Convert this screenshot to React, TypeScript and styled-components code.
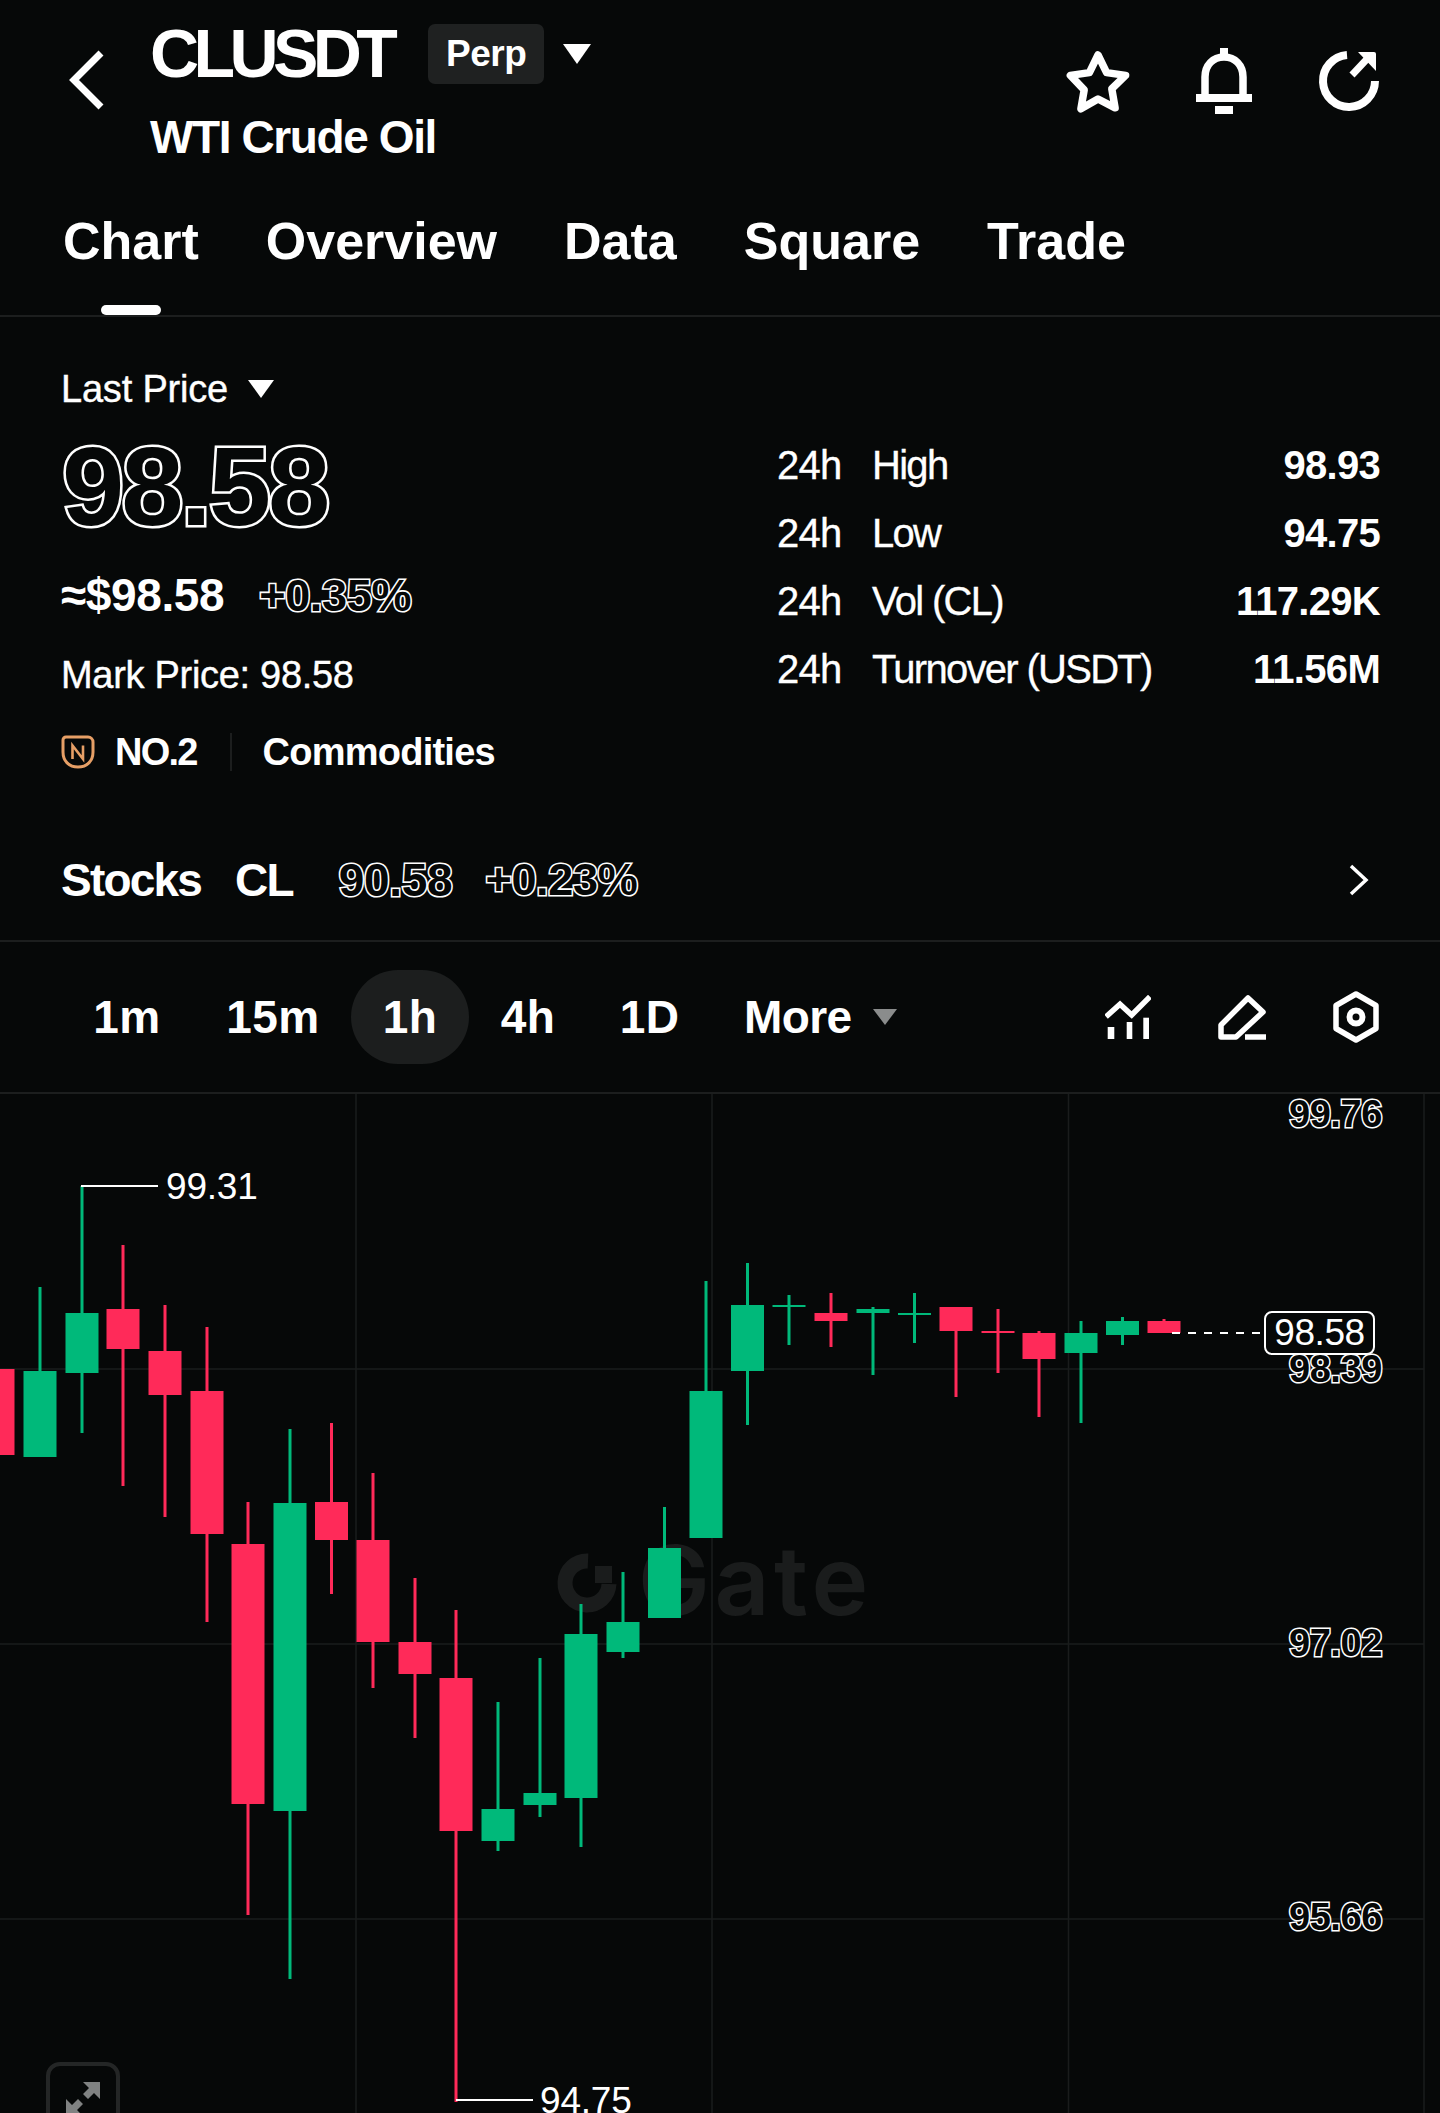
import React from "react";
import styled, { createGlobalStyle } from "styled-components";

const GlobalStyle = createGlobalStyle`
  html, body {
    margin: 0;
    padding: 0;
    background: #060808;
  }
  * {
    box-sizing: border-box;
  }
`;

const FONT = `"Liberation Sans", Arial, sans-serif`;

const Page = styled.div`
  width: 1440px;
  height: 2113px;
  overflow: hidden;
  background: #060808;
  color: #fff;
  font-family: ${FONT};
  display: flex;
  flex-direction: column;
`;

const Header = styled.div`
  height: 193px;
  padding: 20px 60px 0 68px;
  display: flex;
  align-items: flex-start;
`;

const BackBtn = styled.div`
  width: 83px;
  padding-top: 30px;
`;

const TitleCol = styled.div`
  display: flex;
  flex-direction: column;
`;

const TitleRow = styled.div`
  display: flex;
  align-items: flex-start;
`;

const Symbol = styled.div`
  font-size: 68px;
  line-height: 66px;
  font-weight: 700;
  letter-spacing: -5.6px;
  margin-left: -1px;
`;

const Badge = styled.div`
  margin: 4px 0 0 36px;
  width: 116px;
  height: 60px;
  border-radius: 7px;
  background: #1f2121;
  font-size: 37px;
  font-weight: 700;
  display: flex;
  align-items: center;
  justify-content: center;
  letter-spacing: -0.5px;
`;

const Tri = styled.div<{ $w: number; $h: number; $c?: string }>`
  width: 0;
  height: 0;
  border-left: ${(p) => p.$w / 2}px solid transparent;
  border-right: ${(p) => p.$w / 2}px solid transparent;
  border-top: ${(p) => p.$h}px solid ${(p) => p.$c || "#fff"};
`;

const BadgeCaret = styled.div`
  margin: 24px 0 0 19px;
`;

const SubTitle = styled.div`
  margin-top: 27px;
  margin-left: -1px;
  font-size: 46px;
  line-height: 48px;
  font-weight: 700;
  letter-spacing: -1.4px;
`;

const HeaderIcons = styled.div`
  margin-left: auto;
  padding-top: 30px;
  display: flex;
  align-items: flex-start;
  gap: 65px;
  svg {
    overflow: visible;
  }
`;

const Tabs = styled.div`
  height: 124px;
  padding-left: 63px;
  display: flex;
  gap: 67px;
  border-bottom: 2px solid #1c1e1e;
`;

const Tab = styled.div<{ $active?: boolean }>`
  position: relative;
  font-size: 52px;
  line-height: 58px;
  font-weight: 700;
  letter-spacing: 0;
  padding-top: 19px;
  height: 124px;
  ${(p) =>
    p.$active &&
    `
    &::after {
      content: "";
      position: absolute;
      left: 38px;
      bottom: 2px;
      width: 60px;
      height: 10px;
      border-radius: 5px;
      background: #fff;
    }
  `}
`;

const Stats = styled.div`
  height: 625px;
  padding: 0 60px 0 61px;
  border-bottom: 2px solid #1c1e1e;
`;

const TopGrid = styled.div`
  display: grid;
  grid-template-columns: 716px 1fr;
`;

const LeftCol = styled.div`
  display: flex;
  flex-direction: column;
`;

const LastPrice = styled.div`
  margin-top: 50px;
  display: flex;
  align-items: center;
  gap: 20px;
  font-size: 38px;
  line-height: 44px;
  letter-spacing: -0.2px;
  -webkit-text-stroke: 0.4px #fff;
`;

const outline = (w: number) => `
  color: #060808;
  -webkit-text-stroke: ${w}px #fff;
  paint-order: stroke fill;
  font-weight: 700;
`;

const BigPrice = styled.div`
  ${outline(5)}
  margin-top: 17px;
  margin-left: 1px;
  font-size: 112px;
  line-height: 118px;
  letter-spacing: -3px;
`;

const UsdRow = styled.div`
  margin-top: 21px;
  display: flex;
  align-items: baseline;
  gap: 35px;
`;

const UsdValue = styled.div`
  font-size: 46px;
  line-height: 56px;
  font-weight: 700;
  letter-spacing: -0.4px;
`;

const Outlined = styled.div<{ $size: number; $gap?: number }>`
  ${outline(3.2)}
  font-size: ${(p) => p.$size}px;
  letter-spacing: -0.3px;
  margin-right: ${(p) => p.$gap || 0}px;
`;

const MarkPrice = styled.div`
  margin-top: 30px;
  font-size: 38px;
  line-height: 44px;
  letter-spacing: -0.3px;
  -webkit-text-stroke: 0.4px #fff;
`;

const RankRow = styled.div`
  margin-top: 33px;
  height: 44px;
  display: flex;
  align-items: center;
  font-size: 38px;
  line-height: 44px;
  font-weight: 700;
  letter-spacing: -0.75px;
`;

const RankNum = styled.span`
  margin-left: 20px;
  letter-spacing: -1.8px;
`;

const RankSep = styled.span`
  width: 2px;
  height: 38px;
  margin: 0 31px 0 33px;
  background: #1c1e1e;
`;

const StockRow = styled.div`
  margin-top: 78px;
  display: flex;
  align-items: center;
  font-size: 46px;
  line-height: 56px;
  font-weight: 700;
  letter-spacing: -1.8px;
`;

const StockName = styled.span<{ $gap: number }>`
  margin-right: ${(p) => p.$gap}px;
`;

const Chevron = styled.div`
  margin: 0 11px 0 auto;
  display: flex;
`;

const StatList = styled.div`
  margin-top: 114px;
  display: flex;
  flex-direction: column;
`;

const StatRow = styled.div`
  height: 68px;
  display: flex;
  align-items: center;
  font-size: 40px;
  letter-spacing: -1.7px;
  -webkit-text-stroke: 0.3px #fff;
`;

const StatPrefix = styled.span`
  width: 95px;
  flex: none;
  letter-spacing: -0.8px;
`;

const StatValue = styled.span`
  margin-left: auto;
  font-weight: 700;
  letter-spacing: -0.7px;
  -webkit-text-stroke: 0;
`;

const Toolbar = styled.div`
  height: 152px;
  padding: 0 61px 0 0;
  display: flex;
  align-items: center;
  border-bottom: 2px solid #1c1e1e;
`;

const IntervalRow = styled.div`
  display: flex;
  align-items: center;
  padding-left: 91px;
`;

const Interval = styled.div<{ $w: number; $ml?: number; $active?: boolean }>`
  width: ${(p) => p.$w}px;
  margin-left: ${(p) => p.$ml || 0}px;
  height: 94px;
  display: flex;
  align-items: center;
  justify-content: center;
  border-radius: 47px;
  background: ${(p) => (p.$active ? "#1c1e1e" : "transparent")};
  font-size: 46px;
  font-weight: 700;
  letter-spacing: 0.4px;
  flex: none;
`;

const MoreBtn = styled.div`
  margin-left: 67px;
  display: flex;
  align-items: center;
  gap: 21px;
  font-size: 46px;
  font-weight: 700;
  letter-spacing: -0.6px;
`;

const ToolIcons = styled.div`
  margin-left: auto;
  display: flex;
  align-items: center;
  gap: 67px;
`;

const Chart = styled.div`
  position: relative;
  flex: 1;
  overflow: hidden;
`;

const ChartCanvas = styled.svg`
  position: absolute;
  left: 0;
  top: 0;
`;

const Watermark = styled.div`
  position: absolute;
  left: 638px;
  top: 431px;
  font-family: Inter, ${FONT};
  font-size: 96px;
  line-height: 110px;
  font-weight: 600;
  letter-spacing: 4.5px;
  color: #1a1c1c;
`;

const AxisLabel = styled.div`
  ${outline(3)}
  position: absolute;
  right: 58px;
  font-size: 38px;
  line-height: 40px;
  letter-spacing: -0.4px;
`;

const LastBox = styled.div`
  position: absolute;
  left: 1264px;
  top: 217px;
  width: 111px;
  height: 44px;
  border: 2px solid #fff;
  border-radius: 8px;
  background: #060808;
  font-size: 37px;
  display: flex;
  align-items: center;
  justify-content: center;
  letter-spacing: -0.4px;
`;

const Extreme = styled.div<{ $left: number; $top: number }>`
  position: absolute;
  left: ${(p) => p.$left}px;
  top: ${(p) => p.$top}px;
  font-size: 37px;
  line-height: 40px;
  letter-spacing: -0.2px;
`;

const ExpandBtn = styled.div`
  position: absolute;
  left: 46px;
  top: 968px;
  width: 74px;
  height: 74px;
  border: 4px solid #242626;
  border-radius: 14px;
  display: flex;
  align-items: center;
  justify-content: center;
`;

const GREEN = "#00b97a";
const RED = "#ff2a59";
const CHART_TOP = 1094;

type Candle = [number, number, number, number, number];
// x, wick top, body top, body bottom, wick bottom
const candles: Candle[] = [
  [-2, 1313, 1369, 1455, 1462],
  [40, 1287, 1371, 1457, 1457],
  [82, 1186, 1313, 1373, 1433],
  [123, 1245, 1309, 1349, 1486],
  [165, 1305, 1351, 1395, 1517],
  [207, 1327, 1391, 1534, 1622],
  [248, 1502, 1544, 1804, 1915],
  [290, 1429, 1503, 1811, 1979],
  [331.5, 1423, 1502, 1540, 1594],
  [373, 1473, 1540, 1642, 1688],
  [415, 1578, 1642, 1674, 1738],
  [456, 1610, 1678, 1831, 2102],
  [498, 1702, 1809, 1841, 1851],
  [540, 1658, 1793, 1805, 1817],
  [581, 1604, 1634, 1798, 1847],
  [623, 1572, 1622, 1652, 1658],
  [664.5, 1507, 1548, 1618, 1618],
  [706, 1281, 1391, 1538, 1538],
  [747.5, 1263, 1305, 1371, 1425],
  [789, 1295, 1305, 1307, 1345],
  [831, 1293, 1313, 1321, 1347],
  [873, 1307, 1309, 1313, 1375],
  [914.5, 1293, 1313, 1315, 1343],
  [956, 1307, 1307, 1331, 1397],
  [998, 1309, 1331, 1333, 1373],
  [1039, 1331, 1333, 1359, 1417],
  [1081, 1321, 1333, 1353, 1423],
  [1122.5, 1317, 1321, 1335, 1345],
  [1164, 1319, 1321, 1333, 1333],
];
const greens = new Set([1, 2, 7, 12, 13, 14, 15, 16, 17, 18, 19, 21, 22, 26, 27]);

const gridX = [356, 712, 1068.5, 1424];
const gridY = [1369, 1644, 1919];
const axis = [
  { label: "99.76", y: 1114 },
  { label: "98.39", y: 1369 },
  { label: "97.02", y: 1643 },
  { label: "95.66", y: 1917 },
];

const StarIcon = () => (
  <svg width="66" height="64" viewBox="1 0 66 64" fill="none" stroke="#fff" strokeWidth="7.5" strokeLinejoin="round">
    <path d="M33 5l8.6 17.6 19 2.8-13.8 13.4 3.3 19L33 49l-17.1 9.8 3.3-19L5.400 25.400l19-2.800z" />
  </svg>
);

const BellIcon = () => (
  <svg width="58" height="66" viewBox="2 2 58 66" fill="none" stroke="#fff">
    <path d="M29 0v9" strokeWidth="8" />
    <path d="M10 50V29c0-12 8-20 19-20s19 8 19 20v21" strokeWidth="7.5" />
    <path d="M1 50h56" strokeWidth="8" />
    <path d="M20 62h18" strokeWidth="8" />
  </svg>
);

const ShareIcon = () => (
  <svg width="60" height="60" viewBox="0 0 60 60" fill="none" stroke="#fff" strokeWidth="8">
    <path d="M27 5A26 26 0 1 0 55 31" />
    <path d="M32 25L47 9" strokeWidth="7" />
    <path d="M38 2h16a2 2 0 0 1 2 2v17z" fill="#fff" stroke="none" />
  </svg>
);

const RankIcon = () => (
  <svg width="34" height="34" viewBox="0 0 34 34" fill="none">
    <path d="M5 2h22a5 5 0 0 1 5 5v10c0 9-6 15-15 15S2 26 2 17V5a3 3 0 0 1 3-3z" stroke="#e69f66" strokeWidth="3" />
    <path d="M11.500 24V10.500L22 24V10.500" stroke="#e69f66" strokeWidth="2.600" />
  </svg>
);

const IndicatorIcon = () => (
  <svg width="46" height="44" viewBox="0 0 46 44" fill="#fff">
    <path d="M1 21.700L15 9.300 26.700 20 45 1.700" fill="none" stroke="#fff" strokeWidth="5.500" />
    <rect x="2.700" y="32" width="6.600" height="12" />
    <rect x="21.700" y="27" width="5.600" height="17" />
    <rect x="38.300" y="22.700" width="5.700" height="21.300" />
  </svg>
);

const PencilIcon = () => (
  <svg width="48" height="46" viewBox="0 0 48 46" fill="none" stroke="#fff">
    <path d="M3 43V31L30 4l15 14-27 25z" strokeWidth="5.500" strokeLinejoin="round" />
    <path d="M27 43h21" strokeWidth="5.500" />
  </svg>
);

const HexIcon = () => (
  <svg width="46" height="52" viewBox="0 0 46 52" fill="none" stroke="#fff">
    <path d="M23 3l20 11.500v23L23 49 3 37.500v-23z" strokeWidth="5.500" strokeLinejoin="round" />
    <circle cx="23" cy="26" r="6.500" strokeWidth="6" />
  </svg>
);

const ExpandIcon = () => (
  <svg width="38" height="38" viewBox="0 0 38 38" fill="#808282">
    <path d="M36 2v17l-6-6-6 6-5-5 6-6-6-6z" />
    <path d="M2 36V19l6 6 6-6 5 5-6 6 6 6z" />
  </svg>
);

const statRows = [
  { name: "High", value: "98.93" },
  { name: "Low", value: "94.75" },
  { name: "Vol (CL)", value: "117.29K" },
  { name: "Turnover (USDT)", value: "11.56M" },
];

const App = () => {
  return (
    <Page>
      <GlobalStyle />
      <Header>
        <BackBtn>
          <svg width="36" height="60" viewBox="0 0 36 60" fill="none" stroke="#fff" strokeWidth="7">
            <path d="M33 3L6 30l27 27" />
          </svg>
        </BackBtn>
        <TitleCol>
          <TitleRow>
            <Symbol>CLUSDT</Symbol>
            <Badge>Perp</Badge>
            <BadgeCaret>
              <Tri $w={28} $h={20} />
            </BadgeCaret>
          </TitleRow>
          <SubTitle>WTI Crude Oil</SubTitle>
        </TitleCol>
        <HeaderIcons>
          <StarIcon />
          <BellIcon />
          <ShareIcon />
        </HeaderIcons>
      </Header>

      <Tabs>
        <Tab $active>Chart</Tab>
        <Tab>Overview</Tab>
        <Tab>Data</Tab>
        <Tab>Square</Tab>
        <Tab>Trade</Tab>
      </Tabs>

      <Stats>
        <TopGrid>
          <LeftCol>
            <LastPrice>
              Last Price
              <Tri $w={26} $h={18} />
            </LastPrice>
            <BigPrice>98.58</BigPrice>
            <UsdRow>
              <UsdValue>≈$98.58</UsdValue>
              <Outlined $size={45}>+0.35%</Outlined>
            </UsdRow>
            <MarkPrice>Mark Price: 98.58</MarkPrice>
            <RankRow>
              <RankIcon />
              <RankNum>NO.2</RankNum>
              <RankSep />
              Commodities
            </RankRow>
          </LeftCol>
          <StatList>
            {statRows.map((row) => (
              <StatRow key={row.name}>
                <StatPrefix>24h</StatPrefix>
                {row.name}
                <StatValue>{row.value}</StatValue>
              </StatRow>
            ))}
          </StatList>
        </TopGrid>
        <StockRow>
          <StockName $gap={34}>Stocks</StockName>
          <StockName $gap={46}>CL</StockName>
          <Outlined $size={46} $gap={33}>
            90.58
          </Outlined>
          <Outlined $size={45}>+0.23%</Outlined>
          <Chevron>
            <svg width="20" height="32" viewBox="0 0 20 32" fill="none" stroke="#fff" strokeWidth="3.500">
              <path d="M2 2l15 14L2 30" />
            </svg>
          </Chevron>
        </StockRow>
      </Stats>

      <Toolbar>
        <IntervalRow>
          <Interval $w={72}>1m</Interval>
          <Interval $w={92} $ml={64}>15m</Interval>
          <Interval $w={118} $ml={32} $active>1h</Interval>
          <Interval $w={54} $ml={32}>4h</Interval>
          <Interval $w={55} $ml={67}>1D</Interval>
          <MoreBtn>
            More
            <Tri $w={24} $h={16} $c="#8a8c8c" />
          </MoreBtn>
        </IntervalRow>
        <ToolIcons>
          <IndicatorIcon />
          <PencilIcon />
          <HexIcon />
        </ToolIcons>
      </Toolbar>

      <Chart>
        <Watermark>Gate</Watermark>
        <ChartCanvas width="1440" height="1019" viewBox={`0 ${CHART_TOP} 1440 1019`}>
          <path d="M588 1561A22 22 0 1 0 609 1584" fill="none" stroke="#1a1c1c" strokeWidth="15" />
          <rect x="595" y="1566" width="17" height="17" fill="#1a1c1c" />
          {gridX.map((x) => (
            <line key={x} x1={x} x2={x} y1={CHART_TOP} y2={2113} stroke="#1a1c1c" strokeWidth="1.5" />
          ))}
          {gridY.map((y) => (
            <line key={y} x1={0} x2={1424} y1={y} y2={y} stroke="#1a1c1c" strokeWidth="1.5" />
          ))}
          {candles.map(([x, wt, bt, bb, wb], i) => {
            const c = greens.has(i) ? GREEN : RED;
            return (
              <g key={i}>
                <rect x={x - 1.5} y={wt} width={3} height={wb - wt} fill={c} />
                <rect x={x - 16.5} y={bt} width={33} height={bb - bt} fill={c} />
              </g>
            );
          })}
          <path d="M81 1186h77" stroke="#fff" strokeWidth="2" />
          <path d="M456 2100h77" stroke="#fff" strokeWidth="2" />
          <path d="M1172 1333h88" stroke="#fff" strokeWidth="2" strokeDasharray="8 8" />
        </ChartCanvas>
        <Extreme $left={166} $top={73}>99.31</Extreme>
        <Extreme $left={540} $top={987}>94.75</Extreme>
        {axis.map((a) => (
          <AxisLabel key={a.label} style={{ top: a.y - CHART_TOP - 20 }}>
            {a.label}
          </AxisLabel>
        ))}
        <LastBox>98.58</LastBox>
        <ExpandBtn>
          <ExpandIcon />
        </ExpandBtn>
      </Chart>
    </Page>
  );
};

export default App;
